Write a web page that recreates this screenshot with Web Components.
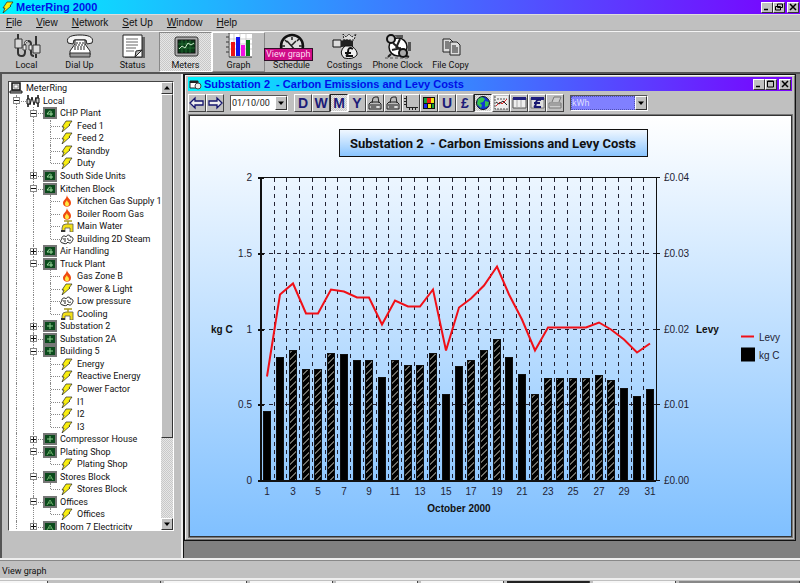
<!DOCTYPE html>
<html lang="en">
<head>
<meta charset="utf-8">
<title>MeterRing 2000</title>
<style>
    html, body {
        margin: 0;
        height: 100%;
    }

    body {
        font-family: "Liberation Sans", Arial, sans-serif;
        font-size: 10px;
        color: #111;
        --face: #c0c0c0;
        --light: #f4f4f4;
        --small: Roboto, "Liberation Sans", sans-serif;
        --bar: linear-gradient(90deg, #00f4ff, #7a00ff);
        --dither: repeating-conic-gradient(#c8c8c8 0 25%, #e6e6e6 0 50%) 0 0 / 2px 2px;
    }
</style>
</head>
<body>
<meter-app></meter-app>

<script>
const box = '<rect x="1" y="1" width="12" height="10" fill="#0b4a1c" stroke="#777" stroke-width="2"/>';

const icons = {
    bolt: ['0 0 14 12', '<path d="M6 1h6L9 5h1L2 12 4 7H2z" fill="#f8ee10" stroke="#222" stroke-width=".7"/>'],
    flame: ['0 0 14 12', '<path d="M7 0c0 3 4 4 4 8 0 5-8 5-8 0 0-3 3-3 4-8z" fill="#ef4a10"/><path d="M7 5c0 2 2 2 2 4 0 3-4 3-4 0 0-2 1-2 2-4z" fill="#ffe640"/>'],
    tap: ['0 0 14 12', '<path d="M2 12V8q0-4 4-4h7v8h-3V8H5v4z" fill="#f3e017" stroke="#555" stroke-width=".8"/><path d="M4 1h8M8 1v3" stroke="#a99a20" stroke-width="1.500"/><path d="M1 10h4v2H1z" fill="#333"/>'],
    cloud: ['0 0 14 12', '<path d="M3 10c-3 0-3-3-1-4-1-3 3-4 4-2 1-3 5-2 4 0 3-1 4 3 2 4 0 2-3 3-4 1-1 2-4 2-5 1zM3 6h3M8 5c-1 2 1 3 3 2M4 8h2" fill="#fff" stroke="#222"/>'],
    four: ['0 0 14 12', box + '<path d="M7 3.500L4 7h6M8 4v5" fill="none" stroke="#9fdc9f"/>'],
    plus: ['0 0 14 12', box + '<path d="M4 6h6M7 3v6" stroke="#8fd08f"/>'],
    peak: ['0 0 14 12', box + '<path d="M4 9l3-5 3 5M5 7h4" fill="none" stroke="#69ad69"/>'],
    computer: ['0 0 14 12', '<path d="M3 1h8v7H3z" fill="#ddd" stroke="#111" stroke-width="1.500"/><path d="M5 3h4v3H5z" fill="#fff" stroke="#555" stroke-width=".6"/><path d="M1 9h12v2H1z" fill="#bbb" stroke="#111"/>'],
    nodes: ['0 0 14 12', '<path d="M2 0v4M2 9v3M12 0v3M12 8v4" stroke="#111" stroke-width="1.500"/><path d="M1 4h3v5H1zM10 3h3v5h-3z" fill="#ccc" stroke="#111"/><path d="M4 10l2-8 2 8 2-8" fill="none" stroke="#111"/>'],

    local: ['0 0 28 26', '<g fill="none" stroke="#333"><path d="M5 1v6M5 15v5q0 3 4 3 3 0 3-4v-8q0-3 3-3t3 3v9q0 3 3 3" stroke-width="2"/><path d="M23 3v9M23 21v4" stroke-width="2"/><path d="M2 6h7v9H2zM20 12h7v8h-7z" fill="#d8d8d8"/><path d="M12 11q0-3 3-3" stroke="#ddd"/></g><path d="M10 12h3v5h-3zM16 12h3v5h-3z" fill="#eee" stroke="#444"/>'],
    phone: ['0 0 28 26', '<path d="M2 10C-1 3 8 2 14 2s15 1 12 8l-5 1-1-4H8l-1 4z" fill="#f4f4f4" stroke="#222"/><path d="M9 7h10v4l5 7v4H4v-4l5-7z" fill="#fff" stroke="#222"/><path d="M10 10h8M9 12h10M8 14h12M8 16h12" stroke="#222" stroke-dasharray="2 1"/><path d="M4 20h20v4H4z" fill="#999" stroke="#333"/>'],
    status: ['0 0 28 26', '<path d="M6 4h20v21H6z" fill="#666"/><path d="M4 2h19v22H4z" fill="#fff" stroke="#222"/><path d="M7 6h12M7 9h12M7 12h12M7 15h10M7 18h8" stroke="#666"/><path d="M16 24l1-6 6-1z" fill="#bbb" stroke="#222"/>'],
    meters: ['0 0 28 26', '<rect x="3" y="4" width="23" height="19" rx="2" fill="#aaa" stroke="#333"/><rect x="6" y="7" width="17" height="13" fill="#0a3c18" stroke="#111"/><path d="M6 11h17M6 15h17M10 7v13M14 7v13M18 7v13" stroke="#287a3b" stroke-width=".7"/><path d="M7 16l3-3 3 2 3-5 3 2 3-2" fill="none" stroke="#c8e8c8"/>'],
    graph: ['0 0 28 26', '<path d="M3 1h24v23H3z" fill="#fff"/><path d="M3 6h24M3 11h24M3 16h24M9 1v23M15 1v23M21 1v23" stroke="#bbb" stroke-width=".7"/><path d="M4 0v24h23M1 4h3M1 9h3M1 14h3M1 19h3" fill="none" stroke="#333"/><path d="M6 9h4v14H6z" fill="#ee1414"/><path d="M11 4h4v19h-4z" fill="#1515ee"/><path d="M16 12h4v11h-4z" fill="#f010e0"/><path d="M21 7h4v16h-4z" fill="#087818"/>'],
    clock: ['0 0 28 26', '<circle cx="14" cy="13" r="11" fill="#ddd" stroke="#111" stroke-width="2.500"/><path d="M9 8l9 10M18 8l-5 5M14 4v3M4 13h3M21 13h3M7 7l2 2M21 6l-2 2" stroke="#222" stroke-width="1.500"/>'],
    costs: ['0 0 28 26', '<path d="M12 1l3 3 3-3 3 3 4-3-2 6H13z" fill="#ddd" stroke="#222" stroke-dasharray="2 1"/><path d="M2 7h8v7H2z" fill="#ddd" stroke="#111"/><path d="M10 8q5-3 12 0v5l-12 1z" fill="#222"/><path d="M14 13h7q6 5 5 9-4 5-13 3-6-6 1-12z" fill="#eee" stroke="#111"/><path d="M22 16q-5-3-5 3 0 3-2 4h7M14 20h6" fill="none" stroke="#111" stroke-width="2"/>'],
    phoneClock: ['0 0 28 26', '<circle cx="14" cy="14" r="9" fill="#fff" stroke="#111" stroke-width="1.500"/><path d="M9 10l10 9M16 6l-4 9M8 17l9-2M7 21l-3 3M20 22l5 2" stroke="#222" stroke-width="2"/><circle cx="7" cy="6" r="4" fill="#ccc" stroke="#111" stroke-width="2"/><circle cx="19" cy="20" r="4" fill="#aaa" stroke="#111" stroke-width="2"/><path d="M10 2h9v3h-5zM24 9h3v9h-3z" fill="#555"/><path d="M1 25h25" stroke="#555" stroke-dasharray="3 2"/>'],
    copy: ['0 0 28 26', '<g fill="#ddd" stroke="#222"><path d="M6 6h7l3 3v10H6z"/><path d="M13 9h7l3 3v10H13z"/><path d="M8 9h4M8 11h4M8 13h4M8 15h4M15 13h4M15 15h6M15 17h6M15 19h6"/></g>'],

    left: ['0 0 16 16', '<path d="M1 8l5-5v3h8v4H6v3z" fill="#eee" stroke="#16166e" stroke-width="1.300"/>'],
    right: ['0 0 16 16', '<path d="M15 8l-5-5v3H2v4h8v3z" fill="#eee" stroke="#16166e" stroke-width="1.300"/>'],
    print: ['0 0 16 16', '<path d="M5 8l1-5 2-1h3l1 6M2 9l2-2h8l2 2v5H2z" fill="#bbb" stroke="#222"/><path d="M3 10h10M4 12h5" stroke="#222"/><path d="M10 12h2" stroke="#fff"/>'],
    axes: ['0 0 16 16', '<path d="M3.500 1v11.500H15M1 3.500h2M1 6.500h2M1 9.500h2M6.500 13v2M9.500 13v2M12.500 13v2" fill="none" stroke="#222"/>'],
    palette: ['0 0 16 16', '<path d="M2 2h12v12H2z" fill="#111"/><path d="M3 3h3v5H3z" fill="#16a336"/><path d="M6 3h4v5H6z" fill="#f01818"/><path d="M10 3h3v5h-3zM7 9h3v4H7z" fill="#f5e710"/><path d="M3 9h3v4H3z" fill="#1c2bee"/><path d="M11 9h2v4h-2z" fill="#16a336"/>'],
    globe: ['0 0 16 16', '<circle cx="8" cy="8" r="6.500" fill="#1237d4" stroke="#111"/><path d="M3 4l4-2 3 2-2 3-3 1 2 2-1 3-4-4zM10 6l4 1-1 4-3 1z" fill="#35c54b"/>'],
    trend: ['0 0 16 16', '<path d="M2 1h13v13H2z" fill="#eee"/><path d="M2 1v13h13M4 4h10" fill="none" stroke="#555" stroke-dasharray="2 1"/><path d="M3 11l4-4 2 2 5-5" fill="none" stroke="#d22"/><path d="M3 7l3 2 4-3 4 4" fill="none" stroke="#222"/>'],
    sheet: ['0 0 16 16', '<path d="M2 3h13v10H2z" fill="#eee" stroke="#555"/><path d="M2 2h13v3H2z" fill="#202080"/><path d="M6 5v8M10 5v8" stroke="#aaa"/>'],
    poundSheet: ['0 0 16 16', '<path d="M2 3h13v10H2z" fill="#ddd" stroke="#777"/><path d="M2 2h13v3H2z" fill="#202080"/><path d="M12 5q-5-1-5 3 0 3-2 4h7M5 8h6" fill="none" stroke="#181870" stroke-width="2"/>'],
    printOff: ['0 0 16 16', '<path d="M5 7l2-5h7l-2 5M2 8h12v5H2zM3 10h11" fill="#ccc" stroke="#777"/>'],
    form: ['0 0 14 12', '<path d="M1 3h8v7H1z" fill="#fff" stroke="#222"/><path d="M1 3h8v2H1z" fill="#222"/><circle cx="9" cy="8" r="3" fill="#eee" stroke="#444"/>'],
    min: ['0 0 10 8', '<path d="M2 6.500h4" stroke="#000" stroke-width="1.500"/>'],
    max: ['0 0 10 8', '<path d="M1.500 1h6v6h-6zM1 1.500h7" fill="none" stroke="#000"/>'],
    restore: ['0 0 10 8', '<path d="M3.500 1h5v3.500h-5zM1.500 3.500h5v3.500h-5z" fill="#c0c0c0" stroke="#000"/>'],
    close: ['0 0 10 8', '<path d="M2 1l6 6M8 1L2 7" stroke="#000" stroke-width="1.500"/>'],
    up: ['0 0 8 8', '<path d="M1 5.500L4 2l3 3.500z"/>'],
    down: ['0 0 8 8', '<path d="M1 2.500L4 6l3-3.500z"/>']
};

class AppIcon extends HTMLElement {
    constructor() {
        super();
        this.attachShadow({ mode: 'open' });
    }

    connectedCallback() {
        const [viewBox, shapes] = icons[this.getAttribute('name')];
        const [, , width, height] = viewBox.split(' ');
        this.shadowRoot.innerHTML = `
        <style>
            :host { display: block; flex: none; }
            svg { display: block; }
        </style>
        <svg viewBox="${viewBox}" width="${width}" height="${height}" aria-hidden="true">${shapes}</svg>`;
    }
}

class TitleBar extends HTMLElement {
    constructor() {
        super();
        this.attachShadow({ mode: 'open' });
    }

    connectedCallback() {
        this.shadowRoot.innerHTML = `
        <style>
            :host {
                display: flex;
                align-items: center;
                height: 14px;
                padding: 0 1px;
                background: var(--bar);
                color: #0010e8;
                font-weight: bold;
                font-size: 11px;
            }
            .title { flex: 1; margin-left: 1px; white-space: pre; }
            button {
                display: grid;
                place-items: center;
                width: 12px;
                height: 11px;
                padding: 0;
                border: 1px solid;
                border-color: #fff #333 #333 #fff;
                background: var(--face);
            }
            button:last-child { margin-left: 2px; }
        </style>
        <app-icon name="${this.getAttribute('icon')}"></app-icon>
        <span class="title"><slot></slot></span>
        <button aria-label="Minimize"><app-icon name="min"></app-icon></button>
        <button aria-label="Resize"><app-icon name="${this.getAttribute('size')}"></app-icon></button>
        <button aria-label="Close"><app-icon name="close"></app-icon></button>`;
    }
}

class MenuBar extends HTMLElement {
    constructor() {
        super();
        this.attachShadow({ mode: 'open' });
        this.shadowRoot.innerHTML = `
        <style>
            :host { display: block; border-top: 1px solid #ddd; border-bottom: 1px solid #aaa; }
            nav { display: flex; gap: 14px; padding: 0 6px; height: 15px; }
            button {
                padding: 0;
                border: 0;
                background: none;
                font: inherit;
                color: inherit;
                line-height: 14px;
            }
        </style>
        <nav>${['File', 'View', 'Network', 'Set Up', 'Window', 'Help']
            .map(name => `<button><u>${name[0]}</u>${name.slice(1)}</button>`).join('')}</nav>`;
    }
}

class ToolButton extends HTMLElement {
    constructor() {
        super();
        this.attachShadow({ mode: 'open' });
    }

    connectedCallback() {
        this.shadowRoot.innerHTML = `
        <style>
            :host { display: block; position: relative; width: 53px; }
            button {
                display: flex;
                flex-direction: column;
                align-items: center;
                gap: 1px;
                width: 100%;
                height: 40px;
                padding: 0;
                border: 1px solid transparent;
                background: none;
                font: 9px/10px var(--small);
                color: inherit;
                white-space: nowrap;
            }
            :host([state="pressed"]) button { border-color: #888 #fff #fff #888; background: var(--dither); }
            :host([state="hover"]) button { border-color: #fff #888 #888 #fff; }
        </style>
        <button><app-icon name="${this.getAttribute('icon')}"></app-icon>${this.getAttribute('label')}</button>
        <slot></slot>`;
    }
}

class MainToolbar extends HTMLElement {
    constructor() {
        super();
        this.attachShadow({ mode: 'open' });
        this.shadowRoot.innerHTML = `
        <style>
            :host { display: flex; border-top: 1px solid var(--light); }
            [role="tooltip"] {
                position: absolute;
                left: 52px;
                top: 16px;
                z-index: 1;
                padding: 0 1px;
                border: 1px solid #301028;
                background: #cf0c88;
                color: #ffd8f0;
                font: 9px/11px var(--small);
                white-space: nowrap;
            }
        </style>
        <tool-button icon="local" label="Local"></tool-button>
        <tool-button icon="phone" label="Dial Up"></tool-button>
        <tool-button icon="status" label="Status"></tool-button>
        <tool-button icon="meters" label="Meters" state="pressed"></tool-button>
        <tool-button icon="graph" label="Graph" state="hover"><span role="tooltip">View graph</span></tool-button>
        <tool-button icon="clock" label="Schedule"></tool-button>
        <tool-button icon="costs" label="Costings"></tool-button>
        <tool-button icon="phoneClock" label="Phone Clock"></tool-button>
        <tool-button icon="copy" label="File Copy"></tool-button>`;
    }
}

// level, toggle, icon, label
const nodes = [
    [0, '', 'computer', 'MeterRing'],
    [1, '-', 'nodes', 'Local'],
    [2, '-', 'four', 'CHP Plant'],
    [3, '', 'bolt', 'Feed 1'],
    [3, '', 'bolt', 'Feed 2'],
    [3, '', 'bolt', 'Standby'],
    [3, '', 'bolt', 'Duty'],
    [2, '+', 'four', 'South Side Units'],
    [2, '-', 'four', 'Kitchen Block'],
    [3, '', 'flame', 'Kitchen Gas Supply 1'],
    [3, '', 'flame', 'Boiler Room Gas'],
    [3, '', 'tap', 'Main Water'],
    [3, '', 'cloud', 'Building 2D Steam'],
    [2, '+', 'four', 'Air Handling'],
    [2, '-', 'four', 'Truck Plant'],
    [3, '', 'flame', 'Gas Zone B'],
    [3, '', 'bolt', 'Power & Light'],
    [3, '', 'cloud', 'Low pressure'],
    [3, '', 'tap', 'Cooling'],
    [2, '+', 'plus', 'Substation 2'],
    [2, '+', 'plus', 'Substation 2A'],
    [2, '-', 'plus', 'Building 5'],
    [3, '', 'bolt', 'Energy'],
    [3, '', 'bolt', 'Reactive Energy'],
    [3, '', 'bolt', 'Power Factor'],
    [3, '', 'bolt', 'I1'],
    [3, '', 'bolt', 'I2'],
    [3, '', 'bolt', 'I3'],
    [2, '+', 'plus', 'Compressor House'],
    [2, '-', 'peak', 'Plating Shop'],
    [3, '', 'bolt', 'Plating Shop'],
    [2, '-', 'peak', 'Stores Block'],
    [3, '', 'bolt', 'Stores Block'],
    [2, '-', 'peak', 'Offices'],
    [3, '', 'bolt', 'Offices'],
    [2, '+', 'peak', 'Room 7 Electricity']
];

class MeterTree extends HTMLElement {
    constructor() {
        super();
        this.attachShadow({ mode: 'open' });
        this.shadowRoot.innerHTML = `
        <style>
            :host {
                display: flex;
                overflow: hidden;
                border: 1px solid;
                border-color: #444 #fff #fff #444;
                background: #fff;
                font-family: var(--small);
                font-size: 9px;
            }
            ul {
                display: flex;
                flex-direction: column;
                flex: 1;
                min-width: 0;
                margin: 0 0 -3px;
                padding: 0;
                list-style: none;
            }
            li { display: flex; flex: 1; align-items: center; min-height: 0; line-height: 12px; white-space: nowrap; }
            .guide {
                position: relative;
                align-self: stretch;
                display: flex;
                flex: none;
                align-items: center;
                width: 17px;
            }
            .guide::before {
                content: '';
                position: absolute;
                left: 7px;
                top: 0;
                bottom: 0;
                border-left: 1px dotted #888;
            }
            .guide.last::before { bottom: 50%; }
            .guide.joint::after {
                content: '';
                position: absolute;
                left: 8px;
                right: 0;
                top: 50%;
                border-top: 1px dotted #888;
            }
            button {
                position: relative;
                z-index: 1;
                display: grid;
                place-items: center;
                width: 7px;
                height: 7px;
                margin-left: 4px;
                padding: 0;
                border: 1px solid #888;
                background: #fff;
            }
            svg { display: block; }
            .label { margin-left: 3px; }
            .scroll { display: flex; flex-direction: column; width: 12px; background: var(--dither); }
            .scroll button {
                width: 12px;
                height: 12px;
                margin: 0;
                border-color: #fff #333 #333 #fff;
                background: var(--face);
            }
            .scroll button.thumb { flex: 344; }
            .track { flex: 80; }
        </style>
        <ul>${nodes.map((node, i) => this.row(node, nodes[i + 1])).join('')}</ul>
        <div class="scroll">
            <button aria-label="Scroll up"><app-icon name="up"></app-icon></button>
            <button class="thumb" aria-label="Scroll position"></button>
            <div class="track"></div>
            <button aria-label="Scroll down"><app-icon name="down"></app-icon></button>
        </div>`;
    }

    row([level, toggle, icon, label], next) {
        let guides = '';
        for (let i = 1; i <= level; i++) {
            const joint = i == level ? 'joint' : '';
            const last = i == 3 && (!next || next[0] < 3) ? 'last' : '';
            guides += `<span class="guide ${joint} ${last}">${joint && toggle ? this.toggle(toggle, label) : ''}</span>`;
        }
        return `<li>${guides}<app-icon name="${icon}"></app-icon><span class="label">${label.replace('&', '&amp;')}</span></li>`;
    }

    toggle(sign, label) {
        const path = sign == '+' ? 'M0 2.500h5M2.500 0v5' : 'M0 2.500h5';
        return `<button aria-label="Toggle ${label}"><svg width="5" height="5"><path d="${path}" stroke="#111"/></svg></button>`;
    }
}

class ComboBox extends HTMLElement {
    constructor() {
        super();
        this.attachShadow({ mode: 'open' });
    }

    connectedCallback() {
        this.shadowRoot.innerHTML = `
        <style>
            :host {
                display: flex;
                box-sizing: border-box;
                height: 16px;
                border: 1px solid;
                border-color: #555 #fff #fff #555;
                background: #fff;
            }
            select {
                flex: 1;
                min-width: 0;
                appearance: none;
                margin: 0;
                padding: 0;
                border: 1px solid #fff;
                border-radius: 0;
                background: #fff;
                color: #222;
                font: 9px/12px var(--small);
            }
            :host([selected]) select { background: #8080ff; color: #dcdcff; border: 1px dotted #5050b0; }
            .arrow {
                display: grid;
                place-items: center;
                width: 10px;
                border: 1px solid;
                border-color: #fff #333 #333 #fff;
                background: var(--face);
                pointer-events: none;
            }
        </style>
        <select aria-label="${this.getAttribute('label')}"><option>${this.getAttribute('value')}</option></select>
        <span class="arrow"><app-icon name="down"></app-icon></span>`;
    }
}

class GraphToolbar extends HTMLElement {
    constructor() {
        super();
        this.attachShadow({ mode: 'open' });
        this.shadowRoot.innerHTML = `
        <style>
            :host { display: flex; align-items: center; height: 23px; }
            button {
                display: grid;
                place-items: center;
                flex: none;
                width: 18px;
                height: 18px;
                padding: 0;
                border: 1px solid;
                border-color: #fff #444 #444 #fff;
                background: var(--face);
                color: #1c1c78;
                font: bold 14px/16px "Liberation Sans", Arial, sans-serif;
            }
            button.down { border-color: #222 #fff #fff #222; background: var(--dither); }
            .date { width: 58px; margin: 0 6px; }
            .unit { width: 78px; margin-left: 6px; }
        </style>
        <button aria-label="Previous"><app-icon name="left"></app-icon></button>
        <button aria-label="Next"><app-icon name="right"></app-icon></button>
        <combo-box class="date" label="Date" value="01/10/00"></combo-box>
        <button>D</button>
        <button>W</button>
        <button class="down">M</button>
        <button>Y</button>
        <button aria-label="Print"><app-icon name="print"></app-icon></button>
        <button aria-label="Print all"><app-icon name="print"></app-icon></button>
        <button aria-label="Axes"><app-icon name="axes"></app-icon></button>
        <button aria-label="Colours"><app-icon name="palette"></app-icon></button>
        <button>U</button>
        <button>£</button>
        <button class="down" aria-label="Emissions"><app-icon name="globe"></app-icon></button>
        <button aria-label="Trend"><app-icon name="trend"></app-icon></button>
        <button aria-label="Table"><app-icon name="sheet"></app-icon></button>
        <button aria-label="Cost table"><app-icon name="poundSheet"></app-icon></button>
        <button aria-label="Report"><app-icon name="printOff"></app-icon></button>
        <combo-box class="unit" label="Unit" value="kWh" selected></combo-box>`;
    }
}

const carbon = [.455, .81, .86, .73, .73, .835, .83, .795, .795, .68, .79, .76, .76, .84, .57, .755,
    .79, .855, .93, .81, .7, .57, .67, .67, .67, .67, .69, .66, .61, .555, .6];
const levy = [.685, 1.23, 1.3, 1.1, 1.1, 1.26, 1.25, 1.21, 1.21, 1.03, 1.19, 1.15, 1.15, 1.26, .86, 1.14,
    1.2, 1.29, 1.41, 1.23, 1.06, .86, 1.01, 1.01, 1.01, 1.01, 1.045, 1, .93, .845, .905];
const solidDays = [1, 2, 7, 8, 10, 15, 16, 20, 21, 29, 30, 31];

class LevyChart extends HTMLElement {
    constructor() {
        super();
        this.attachShadow({ mode: 'open' });
        this.left = 71;
        this.right = 466;
        this.top = 61;
        this.bottom = 364;
        this.shadowRoot.innerHTML = `
        <style>
            :host { display: flex; background: linear-gradient(#fff, #80c0ff); }
            svg { flex: 1; min-width: 0; width: 100%; height: 100%; font-size: 10px; fill: #223; }
            .bold { font-weight: bold; fill: #111; }
            .title { font: bold 13px Roboto, sans-serif; fill: #111; white-space: pre; }
            .end { text-anchor: end; }
            .mid { text-anchor: middle; }
            .grid { stroke: #223; stroke-dasharray: 4 4; shape-rendering: crispEdges; fill: none; }
            .axis { stroke: #111; shape-rendering: crispEdges; fill: none; }
            .thick { stroke-width: 2; }
            .plate { fill: url(#plate); }
            .levy { stroke: #f01018; stroke-width: 2; fill: none; }
        </style>
        <svg viewBox="0 0 601 419" role="img" aria-label="Carbon emissions and levy costs">
            <defs>
                <linearGradient id="plate" x2="0" y2="1">
                    <stop offset="0" stop-color="#f2f8ff"/><stop offset="1" stop-color="#88c4ff"/>
                </linearGradient>
                <pattern id="hatch" width="7" height="7" patternUnits="userSpaceOnUse">
                    <path d="M0 0h7v7H0z" fill="#000"/>
                    <path d="M-1 8L8-1M-1 1L1-1M6 8L8 6" stroke="#d8d8cc" stroke-width="1"/>
                </pattern>
            </defs>
            <rect class="axis plate" x="149" y="13" width="308" height="27"/>
            <text class="title mid" x="303" y="31">Substation 2  - Carbon Emissions and Levy Costs</text>
            ${this.scales()}
            ${this.days()}
            <path class="axis" d="M${this.left} ${this.top}H${this.right}V${this.bottom}"/>
            <path class="axis thick" d="M${this.left} ${this.top}V${this.bottom}H${this.right}"/>
            <polyline class="levy" points="${levy.map((v, i) => this.x(i + .5) + ',' + this.y(v)).join(' ')}"/>
            <text class="bold" x="21" y="216">kg C</text>
            <text class="bold" x="506" y="216">Levy</text>
            <text class="bold mid" x="269" y="395">October 2000</text>
            <path class="levy" d="M551 220h13"/>
            <text x="569" y="224">Levy</text>
            <rect x="551" y="231" width="14" height="14" fill="#000"/>
            <text x="569" y="242">kg C</text>
        </svg>`;
    }

    x(day) {
        return Math.round(this.left + day * (this.right - this.left) / 31);
    }

    y(value) {
        return Math.round(this.bottom - value * (this.bottom - this.top) / 2);
    }

    scales() {
        return ['0', '0.5', '1', '1.5', '2'].map((label, i) => {
            const y = this.y(label);
            return `
            <path class="grid" d="M${this.left} ${y}H${this.right}"/>
            <path class="axis thick" d="M${this.left - 3} ${y}h6"/>
            <path class="axis" d="M${this.right} ${y}h4"/>
            <text class="end" x="62" y="${y + 3}">${label}</text>
            <text x="474" y="${y + 3}">£0.0${i}</text>`;
        }).join('');
    }

    days() {
        return carbon.map((value, i) => {
            const day = i + 1;
            const fill = solidDays.includes(day) ? '#000' : 'url(#hatch)';
            const top = this.y(value);
            return `
            <path class="grid" d="M${this.x(day)} ${this.top}V${this.bottom}"/>
            <rect x="${this.x(i + .5) - 4}" y="${top}" width="8" height="${this.bottom - top}" fill="${fill}"/>
            <path class="axis" d="M${this.x(i + .5) - 4} ${this.bottom}V${top}h7V${this.bottom}"/>
            ${day % 2 ? `<text class="mid" x="${this.x(i + .5)}" y="378">${day}</text>` : ''}`;
        }).join('');
    }
}

class GraphWindow extends HTMLElement {
    constructor() {
        super();
        this.attachShadow({ mode: 'open' });
        this.shadowRoot.innerHTML = `
        <style>
            :host {
                display: flex;
                flex-direction: column;
                border: 1px solid #111;
                background: var(--face);
            }
            .frame {
                display: flex;
                flex-direction: column;
                flex: 1;
                min-height: 0;
                padding: 1px 2px 2px;
                border: 1px solid;
                border-color: #f4f4f4 #777 #777 #f4f4f4;
            }
            levy-chart { flex: 1; min-height: 0; border: 1px solid #333; outline: 1px solid #777; margin: 1px 0 0 1px; }
        </style>
        <div class="frame">
            <title-bar icon="form" size="max">Substation 2  - Carbon Emissions and Levy Costs</title-bar>
            <graph-toolbar></graph-toolbar>
            <levy-chart></levy-chart>
        </div>`;
    }
}

class StatusBar extends HTMLElement {
    constructor() {
        super();
        this.attachShadow({ mode: 'open' });
        this.shadowRoot.innerHTML = `
        <style>
            :host { display: block; border-top: 2px solid #eee; }
            .text {
                height: 17px;
                padding-left: 2px;
                border-top: 1px solid #888;
                font: 9px/20px var(--small);
            }
            .strip {
                display: flex;
                gap: 3px;
                border-top: 2px solid #eee;
                padding-top: 1px;
            }
            .strip i { flex: 82; height: 2px; background: #f6f6f6; border-right: 1px solid #444; }
            .strip .start { flex: 47; }
            .strip .quick { flex: 110; background: var(--face); }
            .strip .on { background: #222; }
            .strip .tray { flex: 121; background: #888; }
        </style>
        <div class="text">View graph</div>
        <div class="strip">
            <i class="start"></i><i class="quick"></i><i></i><i></i><i></i><i></i><i class="on"></i><i></i><i class="tray"></i>
        </div>`;
    }
}

class MeterApp extends HTMLElement {
    constructor() {
        super();
        this.attachShadow({ mode: 'open' });
        this.shadowRoot.innerHTML = `
        <style>
            :host {
                display: flex;
                flex-direction: column;
                height: 100vh;
                background: var(--face);
            }
            main { display: flex; flex: 1; min-height: 0; border-top: 2px solid #555; }
            aside {
                display: flex;
                flex: none;
                box-sizing: border-box;
                width: 183px;
                padding: 7px 7px 27px 6px;
                border-left: 2px solid #555;
                border-right: 2px solid #eee;
            }
            meter-tree { flex: 1; min-width: 0; }
            .desk { display: flex; flex: 1; min-width: 0; padding: 0 4px 17px 0; background: #808080; border-left: 1px solid #111; }
            graph-window { flex: 1; min-width: 0; }
        </style>
        <title-bar icon="bolt" size="restore">MeterRing 2000</title-bar>
        <menu-bar></menu-bar>
        <main-toolbar></main-toolbar>
        <main>
            <aside><meter-tree></meter-tree></aside>
            <div class="desk"><graph-window></graph-window></div>
        </main>
        <status-bar></status-bar>`;
    }
}

window.customElements.define('app-icon', AppIcon);
window.customElements.define('title-bar', TitleBar);
window.customElements.define('menu-bar', MenuBar);
window.customElements.define('tool-button', ToolButton);
window.customElements.define('main-toolbar', MainToolbar);
window.customElements.define('meter-tree', MeterTree);
window.customElements.define('combo-box', ComboBox);
window.customElements.define('graph-toolbar', GraphToolbar);
window.customElements.define('levy-chart', LevyChart);
window.customElements.define('graph-window', GraphWindow);
window.customElements.define('status-bar', StatusBar);
window.customElements.define('meter-app', MeterApp);
</script>
</body>
</html>
